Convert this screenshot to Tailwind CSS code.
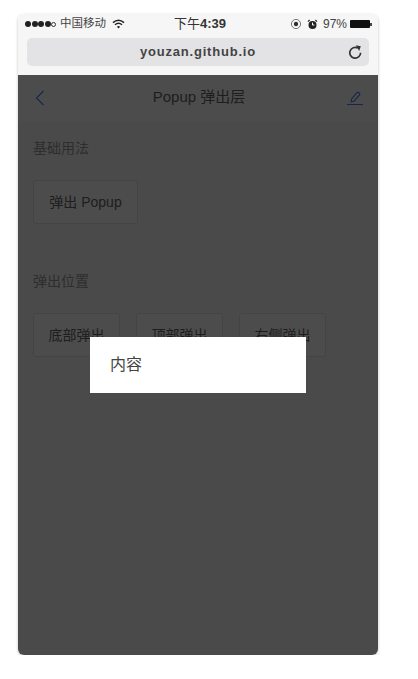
<!DOCTYPE html>
<html lang="zh">
<head>
  <meta charset="UTF-8" />
  <meta name="viewport" content="width=device-width, initial-scale=1.0" />
  <title>Popup 弹出层</title>
  <script src="https://cdn.jsdelivr.net/npm/@tailwindcss/browser@4"></script>
</head>
<body class="bg-white font-['Liberation_Sans','Noto_Sans_CJK_SC',sans-serif]">

  <div class="pt-[14px] pl-[18px]">
    <!-- Phone -->
    <div class="w-[360px] h-[641px] rounded-[6px] overflow-hidden flex flex-col shadow-[0_1px_3px_rgba(0,0,0,0.25)]">

      <!-- Browser chrome -->
      <div class="h-[61px] shrink-0 bg-[#f6f6f6] pl-[7px] pr-[6px]">
        <div class="h-[20px] flex items-center justify-between text-[11.5px] text-[#444] relative">
          <div class="flex items-center gap-[4px]">
            <span class="flex items-center gap-[0.5px]">
              <span class="w-[6px] h-[6px] rounded-full bg-[#222]"></span>
              <span class="w-[6px] h-[6px] rounded-full bg-[#222]"></span>
              <span class="w-[6px] h-[6px] rounded-full bg-[#222]"></span>
              <span class="w-[6px] h-[6px] rounded-full bg-[#222]"></span>
              <span class="w-[5px] h-[5px] rounded-full border border-[#333]"></span>
            </span>
            <span>中国移动</span>
            <svg class="ml-[2px]" width="13" height="10" viewBox="0 0 13 10" fill="none" stroke="#222" stroke-width="1.5">
              <path d="M1 3.6C4.4.6 8.6.6 12 3.6" />
              <path d="M3 5.7c2.2-1.9 4.8-1.9 7 0" />
              <path d="M6.5 9.4 4.9 7.7c1-.8 2.2-.8 3.2 0z" fill="#222" stroke="none" />
            </svg>
          </div>
          <span class="absolute left-[149px] text-[13px] text-[#333]">下午<span class="font-bold">4:39</span></span>
          <div class="flex items-center">
            <svg width="12" height="12" viewBox="0 0 12 12" fill="none">
              <circle cx="6" cy="6" r="4.6" stroke="#777" stroke-width="1" />
              <circle cx="6" cy="6" r="2.2" fill="#333" />
            </svg>
            <svg class="ml-[5px]" width="11" height="11" viewBox="0 0 11 11" fill="none">
              <circle cx="5.5" cy="6" r="4" fill="#222" />
              <path d="M5.5 3.6V6H7.4" stroke="#fff" stroke-width="1" />
              <path d="M1 2.6 2.6 1M10 2.6 8.4 1" stroke="#222" stroke-width="1.2" />
            </svg>
            <span class="ml-[5px] text-[12px]">97%</span>
            <span class="flex items-center ml-[3px]">
              <span class="w-[20px] h-[8px] bg-[#111] rounded-[1px]"></span>
              <span class="w-[2px] h-[3px] bg-[#444]"></span>
            </span>
          </div>
        </div>
        <div class="mt-[4px] ml-[2px] mr-[3px] h-[28px] rounded-[5px] bg-[#e3e3e5] flex items-center justify-center relative">
          <span class="text-[13px] font-bold tracking-[0.8px] text-[#444]">youzan.github.io</span>
          <svg class="absolute right-[7px] top-[7px]" width="14" height="14" viewBox="0 0 14 14" fill="none" stroke="#333" stroke-width="1.7">
            <path d="M9.8 3A5.4 5.4 0 1 0 12.6 7.8" />
            <path d="M7.8 0.2 12.8 1.2 11.2 6z" fill="#333" stroke="none" />
          </svg>
        </div>
      </div>

      <!-- Page under overlay -->
      <div class="relative flex-1 bg-[#f8f8f8]">
        <div class="h-[46px] bg-white flex items-center justify-between pl-[17px] pr-[15px] relative">
          <svg width="10" height="16" viewBox="0 0 10 16" fill="none" stroke="#4a80f0" stroke-width="1.1">
            <path d="M8.5 1 1.5 8l7 7" />
          </svg>
          <span class="absolute left-0 right-0 text-center text-[15px] leading-[20px] -translate-y-[1px] translate-x-[1px] text-[#666]">Popup 弹出层</span>
          <svg width="16" height="15" viewBox="0 0 16 15" fill="none" stroke="#4a80f0" stroke-width="1.1">
            <path d="M4.2 10.8 4.6 8 10 1.6a1.2 1.2 0 0 1 1.7-.1l.7.6a1.2 1.2 0 0 1 .1 1.7L7.1 10.2z" />
            <path d="M0 13.5H16" />
          </svg>
        </div>

        <section class="px-[15px]">
          <h2 class="pt-[17px] text-[14px] leading-[20px] text-[#999]">基础用法</h2>
          <button class="mt-[22px] w-[105px] h-[44px] rounded-[3px] border border-[#e5e5e5] bg-white text-[14px] text-[#666]">弹出 Popup</button>
        </section>

        <section class="px-[15px]">
          <h2 class="pt-[47px] text-[14px] leading-[20px] text-[#999]">弹出位置</h2>
          <div class="mt-[22px] flex gap-[16px]">
            <button class="w-[87px] h-[44px] rounded-[3px] border border-[#e5e5e5] bg-white text-[14px] text-[#666]">底部弹出</button>
            <button class="w-[87px] h-[44px] rounded-[3px] border border-[#e5e5e5] bg-white text-[14px] text-[#666]">顶部弹出</button>
            <button class="w-[87px] h-[44px] rounded-[3px] border border-[#e5e5e5] bg-white text-[14px] text-[#666]">右侧弹出</button>
          </div>
        </section>

        <!-- Overlay -->
        <div class="absolute inset-0 bg-black/70"></div>

        <!-- Popup -->
        <div class="absolute left-[72px] top-[262px] w-[216px] h-[56px] bg-white flex items-center pl-[20px] text-[16px] text-[#444]">内容</div>
      </div>
    </div>
  </div>

</body>
</html>
